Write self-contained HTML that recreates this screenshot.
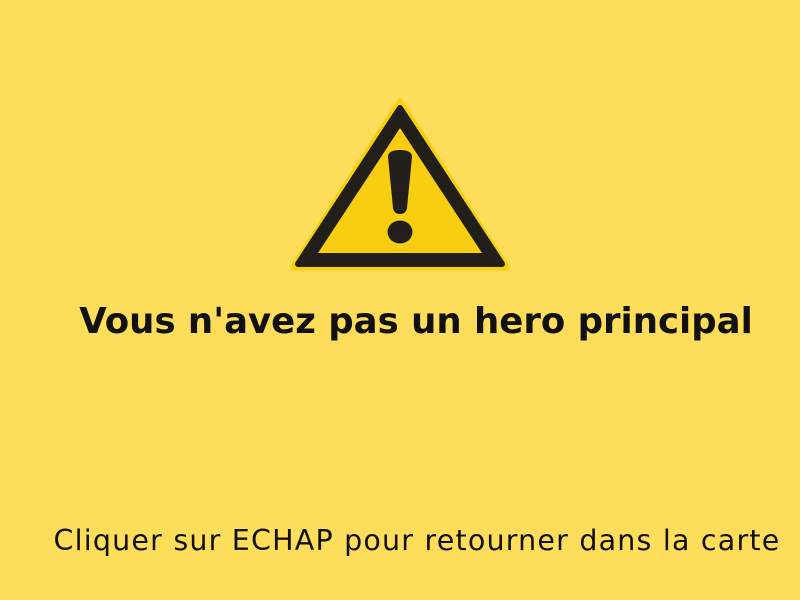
<!DOCTYPE html>
<html><head><meta charset="utf-8"><style>
html,body{margin:0;padding:0;width:800px;height:600px;overflow:hidden;background:#FEDD5B;}
.h{position:absolute;left:0;width:832px;top:301px;text-align:center;font:bold 35.5px "DejaVu Sans",sans-serif;color:#111;white-space:nowrap;}
.b{position:absolute;left:0;width:834px;top:524px;text-align:center;font:28.5px "DejaVu Sans",sans-serif;letter-spacing:1.2px;color:#111;white-space:nowrap;}
svg{position:absolute;left:0;top:0;}
</style></head><body>
<svg width="800" height="600">
<polygon points="400,102 294,267 506,267" fill="#F7CF10" stroke="#F7CF10" stroke-width="7" stroke-linejoin="round"/>
<polygon points="400,108 298,264 502,264" fill="#221E1A" stroke="#221E1A" stroke-width="6" stroke-linejoin="round"/>
<polygon points="400,128 318,253 482,253" fill="#F7CF10"/>
<path d="M388,157 Q388,150 400,150 Q412,150 412,157 L407,208 Q406,214 400,214 Q394,214 393,208 Z" fill="#221E1A"/>
<ellipse cx="400" cy="232" rx="12.5" ry="11.5" fill="#221E1A"/>
</svg>
<div class="h">Vous n'avez pas un hero principal</div>
<div class="b">Cliquer sur ECHAP pour retourner dans la carte</div>
</body></html>
